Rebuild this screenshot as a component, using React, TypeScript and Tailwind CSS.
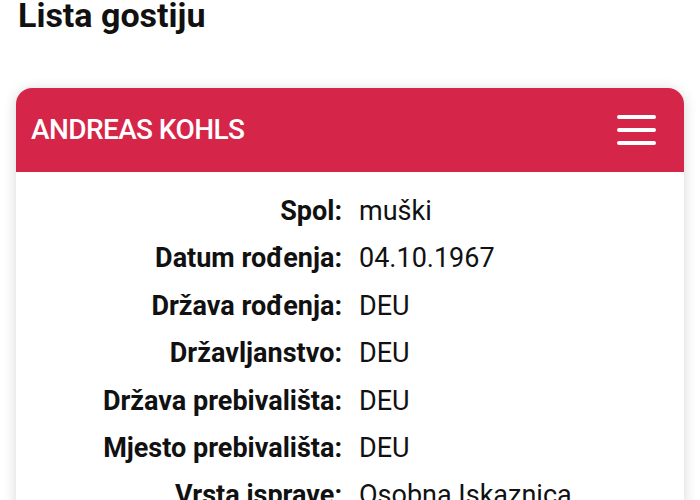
import React from "react";

const guest = {
  name: "ANDREAS KOHLS",
  rows: [
    { label: "Spol:", value: "muški" },
    { label: "Datum rođenja:", value: "04.10.1967" },
    { label: "Država rođenja:", value: "DEU" },
    { label: "Državljanstvo:", value: "DEU" },
    { label: "Država prebivališta:", value: "DEU" },
    { label: "Mjesto prebivališta:", value: "DEU" },
    { label: "Vrsta isprave:", value: "Osobna Iskaznica" },
    { label: "Broj isprave:", value: "L01X00T47" },
  ],
};

export default function App() {
  return (
    <div className="h-[500px] w-[700px] overflow-hidden bg-white font-['Roboto',sans-serif] text-[#111]">
      <h1 className="pl-[18px] text-[34px] font-bold leading-[30px]">
        Lista gostiju
      </h1>

      <div className="mx-4 mt-[58px] overflow-hidden rounded-[16px] bg-white shadow-[0_2px_14px_rgba(0,0,0,0.16)]">
        {/* Header */}
        <div className="flex h-[84px] items-center justify-between bg-[#d52649] pl-[15px] pr-[28px]">
          <span className="text-[28px] font-medium tracking-[-0.6px] text-white">{guest.name}</span>
          <button className="flex w-[39px] flex-col gap-[8.7px]">
            <span className="h-1 w-full rounded-full bg-white" />
            <span className="h-1 w-full rounded-full bg-white" />
            <span className="h-1 w-full rounded-full bg-white" />
          </button>
        </div>

        {/* Details */}
        <div className="grid grid-cols-[326px_1fr] gap-x-[17px] pt-[16px] text-[27px] leading-[47.4px]">
          {guest.rows.map((row) => (
            <React.Fragment key={row.label}>
              <span className="text-right font-bold">{row.label}</span>
              <span className="font-normal">{row.value}</span>
            </React.Fragment>
          ))}
        </div>
      </div>
    </div>
  );
}
